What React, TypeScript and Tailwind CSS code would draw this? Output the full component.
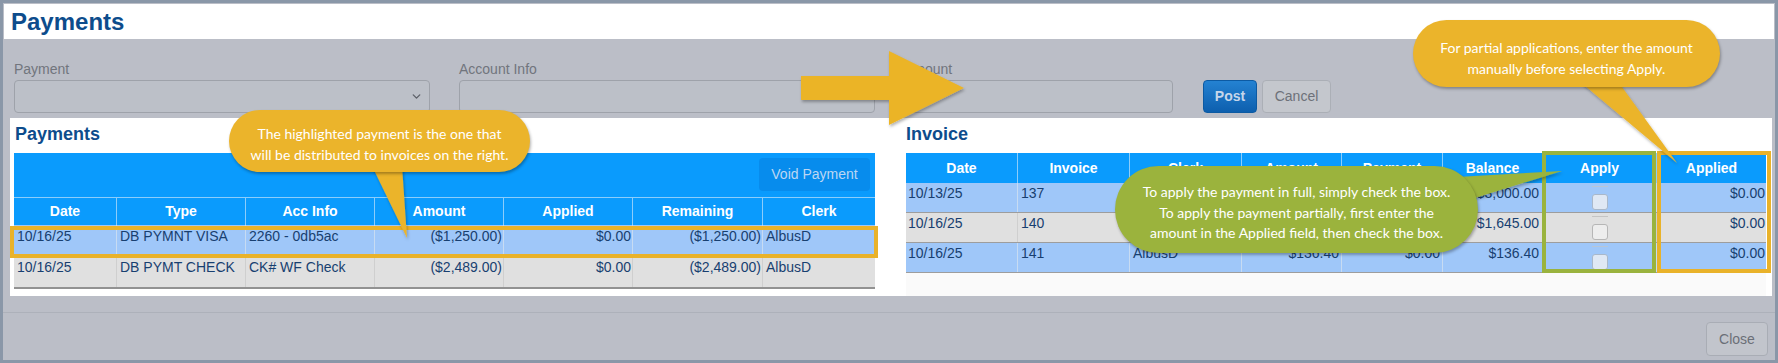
import { ChevronDown } from "lucide-react";

const payCols = "grid grid-cols-[102px_129px_129px_129px_129px_130px_113px]";
const invCols = "grid grid-cols-[111px_112px_112px_100px_101px_100px_114px_110px]";

const payments = [
  { date: "10/16/25", type: "DB PYMNT VISA", info: "2260 - 0db5ac", amount: "($1,250.00)", applied: "$0.00", remaining: "($1,250.00)", clerk: "AlbusD", bg: "bg-[#9fc7f9]", line: "border-[#c7dbf2]" },
  { date: "10/16/25", type: "DB PYMT CHECK", info: "CK# WF Check", amount: "($2,489.00)", applied: "$0.00", remaining: "($2,489.00)", clerk: "AlbusD", bg: "bg-[#e0e0e0]", line: "border-[#cfcfcf]" },
];

const invoices = [
  { date: "10/13/25", inv: "137", clerk: "AlbusD", amount: "$3,000.00", payment: "$0.00", balance: "$3,000.00", applied: "$0.00", blue: true },
  { date: "10/16/25", inv: "140", clerk: "AlbusD", amount: "$1,645.00", payment: "$0.00", balance: "$1,645.00", applied: "$0.00", blue: false },
  { date: "10/16/25", inv: "141", clerk: "AlbusD", amount: "$136.40", payment: "$0.00", balance: "$136.40", applied: "$0.00", blue: true },
];

function Field(props: { label: string; width: string; select?: boolean }) {
  return (
    <div className={"flex flex-col " + props.width}>
      <div className="h-[16px] leading-[16px] text-[14px] text-[#71757d] mb-[3px]">{props.label}</div>
      <div className="h-[33px] rounded-[4px] border border-[#9ea2aa] bg-[#bcc0c8] flex items-center justify-end pr-[6px]">
        {props.select && <ChevronDown size={13} strokeWidth={2.5} className="text-[#5d6169]" />}
      </div>
    </div>
  );
}

export default function App() {
  return (
    <div className="relative w-[1778px] h-[363px] p-[3px] bg-[#bbbec7] shadow-[inset_0_0_0_3px_#8a97a8] overflow-hidden font-['Liberation_Sans',Arial,sans-serif]">
      {/* header */}
      <div className="mt-[1px] mx-[1px] h-[35px] bg-white pl-[7px] flex items-center">
        <h1 className="text-[24px] font-bold text-[#0d4c8c] leading-[28px]">Payments</h1>
      </div>

      {/* form */}
      <div className="h-[79px] flex items-end pl-[11px] pt-[22px] pb-[5px]">
        <Field label="Payment" width="w-[416px]" select />
        <div className="w-[29px]" />
        <Field label="Account Info" width="w-[416px]" />
        <div className="w-[29px]" />
        <Field label="Amount" width="w-[269px]" />
        <button className="ml-[30px] h-[33px] w-[54px] rounded-[4px] bg-gradient-to-b from-[#2482d2] to-[#0d5fae] border border-[#0c5aa3] text-[14px] font-bold text-[#c6d6ea]">Post</button>
        <button className="ml-[5px] h-[33px] w-[69px] rounded-[4px] bg-[#c4c7cd] border border-[#abafb6] text-[14px] text-[#6d7179]">Cancel</button>
      </div>

      {/* content */}
      <div className="ml-[7px] mr-[3px] h-[178px] bg-white flex pl-[4px]">
        {/* payments */}
        <div className="w-[861px] flex flex-col">
          <h2 className="pt-[5px] pl-[1px] leading-[22px] text-[18px] font-bold text-[#0d4c8c] mb-[8px]">Payments</h2>
          <div className="h-[44px] bg-[#0a9bfd] flex justify-end items-start pt-[5px] pr-[5px]">
            <button className="h-[33px] w-[111px] rounded-[4px] bg-[#078ced] text-[14px] text-[#bcd7f3]">Void Payment</button>
          </div>
          <div className={payCols + " h-[28px] bg-[#0a9bfd] border-t border-[#8ccdfb]"}>
            {["Date", "Type", "Acc Info", "Amount", "Applied", "Remaining", "Clerk"].map((h, i) => (
              <div key={h} className={"flex items-center justify-center text-[14px] font-bold text-white " + (i > 0 ? "border-l border-[#8ccdfb]" : "")}>{h}</div>
            ))}
          </div>
          {payments.map((p) => (
            <div key={p.type} className={payCols + " h-[31px] text-[14px] leading-[18px] text-[#183f70] " + p.bg}>
              <div className="pt-[2px] pl-[3px]">{p.date}</div>
              <div className={"pt-[2px] pl-[3px] border-l " + p.line}>{p.type}</div>
              <div className={"pt-[2px] pl-[3px] border-l " + p.line}>{p.info}</div>
              <div className={"pt-[2px] pr-[1px] text-right border-l " + p.line}>{p.amount}</div>
              <div className={"pt-[2px] pr-[1px] text-right border-l " + p.line}>{p.applied}</div>
              <div className={"pt-[2px] pr-[1px] text-right border-l " + p.line}>{p.remaining}</div>
              <div className={"pt-[2px] pl-[3px] border-l " + p.line}>{p.clerk}</div>
            </div>
          ))}
          <div className="h-[2px] bg-[#929292]" />
        </div>

        {/* invoice */}
        <div className="w-[860px] ml-[31px] flex flex-col">
          <h2 className="pt-[5px] leading-[22px] text-[18px] font-bold text-[#0d4c8c] mb-[8px]">Invoice</h2>
          <div className={invCols + " h-[30px] bg-[#0a9bfd]"}>
            {["Date", "Invoice", "Clerk", "Amount", "Payment", "Balance", "Apply", "Applied"].map((h, i) => (
              <div key={h} className={"flex items-center justify-center text-[14px] font-bold text-white " + (i > 0 ? "border-l border-[#8ccdfb]" : "")}>{h}</div>
            ))}
          </div>
          {invoices.map((r) => {
            const line = r.blue ? "border-[#c7dbf2]" : "border-[#cfcfcf]";
            return (
              <div key={r.inv} className={invCols + " h-[30px] border-b border-[#9d9d9d] text-[14px] leading-[18px] text-[#183f70] " + (r.blue ? "bg-[#9fc7f9]" : "bg-[#e0e0e0]")}>
                <div className="pt-[1px] pl-[2px]">{r.date}</div>
                <div className={"pt-[1px] pl-[3px] border-l " + line}>{r.inv}</div>
                <div className={"pt-[1px] pl-[3px] border-l " + line}>{r.clerk}</div>
                <div className={"pt-[1px] pr-[2px] text-right border-l " + line}>{r.amount}</div>
                <div className={"pt-[1px] pr-[2px] text-right border-l " + line}>{r.payment}</div>
                <div className={"pt-[1px] pr-[3px] text-right border-l " + line}>{r.balance}</div>
                <div className={"flex flex-col items-center pt-[3px] border-l " + line}>
                  <div className={"h-[1px] w-[16px] " + (r.blue ? "bg-[#b7c6d8]" : "bg-[#c4c4c4]")} />
                  <div className={"mt-[7px] h-[16px] w-[16px] rounded-[3px] border " + (r.blue ? "bg-[#dfe8f4] border-[#a9b8ca]" : "bg-[#ededed] border-[#b6b6b6]")} />
                </div>
                <div className={"pt-[1px] pr-[1px] text-right border-l " + line}>{r.applied}</div>
              </div>
            );
          })}
          <div className="h-[23px] bg-[#fafafa]" />
        </div>
      </div>

      {/* footer */}
      <div className="mt-[16px] border-t border-[#adb1ba] h-[48px] flex justify-end pt-[9px] pr-[7px]">
        <button className="h-[34px] w-[62px] rounded-[4px] bg-[#c2c5cc] border border-[#a9adb5] text-[14px] text-[#6b6f77]">Close</button>
      </div>

      {/* annotations */}
      <div className="absolute left-[10px] top-[226px] w-[868px] h-[32px] border-[4px] border-[#e9b22a]" />
      <div className="absolute left-[1542px] top-[151px] w-[114px] h-[122px] border-[4px] border-[#9ab33e]" />
      <div className="absolute left-[1657px] top-[151px] w-[114px] h-[122px] border-[4px] border-[#e9b22a]" />

      <svg className="absolute left-0 top-0 pointer-events-none" width="1778" height="363">
        <defs>
          <filter id="sh" x="-20%" y="-20%" width="140%" height="140%">
            <feDropShadow dx="1" dy="2" stdDeviation="1.5" floodColor="#000" floodOpacity="0.3" />
          </filter>
        </defs>
        <polygon points="801,76 889,76 889,51 964,88 889,125 889,100 801,100" fill="#ebb428" filter="url(#sh)" />
        <polygon points="372,166 402,166 407,238" fill="#ebb42b" filter="url(#sh)" />
        <polygon points="1578,80 1617,80 1677,163" fill="#ebb42b" filter="url(#sh)" />
        <polygon points="1440,178 1562,171 1462,202" fill="#9bb33d" filter="url(#sh)" />
      </svg>

      <div className="absolute left-[229px] top-[110px] w-[301px] h-[62px] rounded-full bg-[#ebb42b] shadow-[1px_2px_3px_rgba(0,0,0,0.3)] flex items-center justify-center pt-[5px] text-center font-['Lato',sans-serif] text-[14px] leading-[21px] text-white">
        <div>The highlighted payment is the one that<br />will be distributed to invoices on the right.</div>
      </div>
      <div className="absolute left-[1413px] top-[20px] w-[307px] h-[67px] rounded-full bg-[#ebb42b] shadow-[1px_2px_3px_rgba(0,0,0,0.3)] flex items-center justify-center pt-[8px] text-center font-['Lato',sans-serif] text-[14px] leading-[21px] text-white">
        <div>For partial applications, enter the amount<br />manually before selecting Apply.</div>
      </div>
      <div className="absolute left-[1115px] top-[166px] w-[363px] h-[87px] rounded-full bg-[#9bb33d] shadow-[1px_2px_3px_rgba(0,0,0,0.3)] flex items-center justify-center pt-[7px] text-center font-['Lato',sans-serif] text-[14px] leading-[20.5px] text-white">
        <div>To apply the payment in full, simply check the box.<br />To apply the payment partially, first enter the<br />amount in the Applied field, then check the box.</div>
      </div>
    </div>
  );
}
